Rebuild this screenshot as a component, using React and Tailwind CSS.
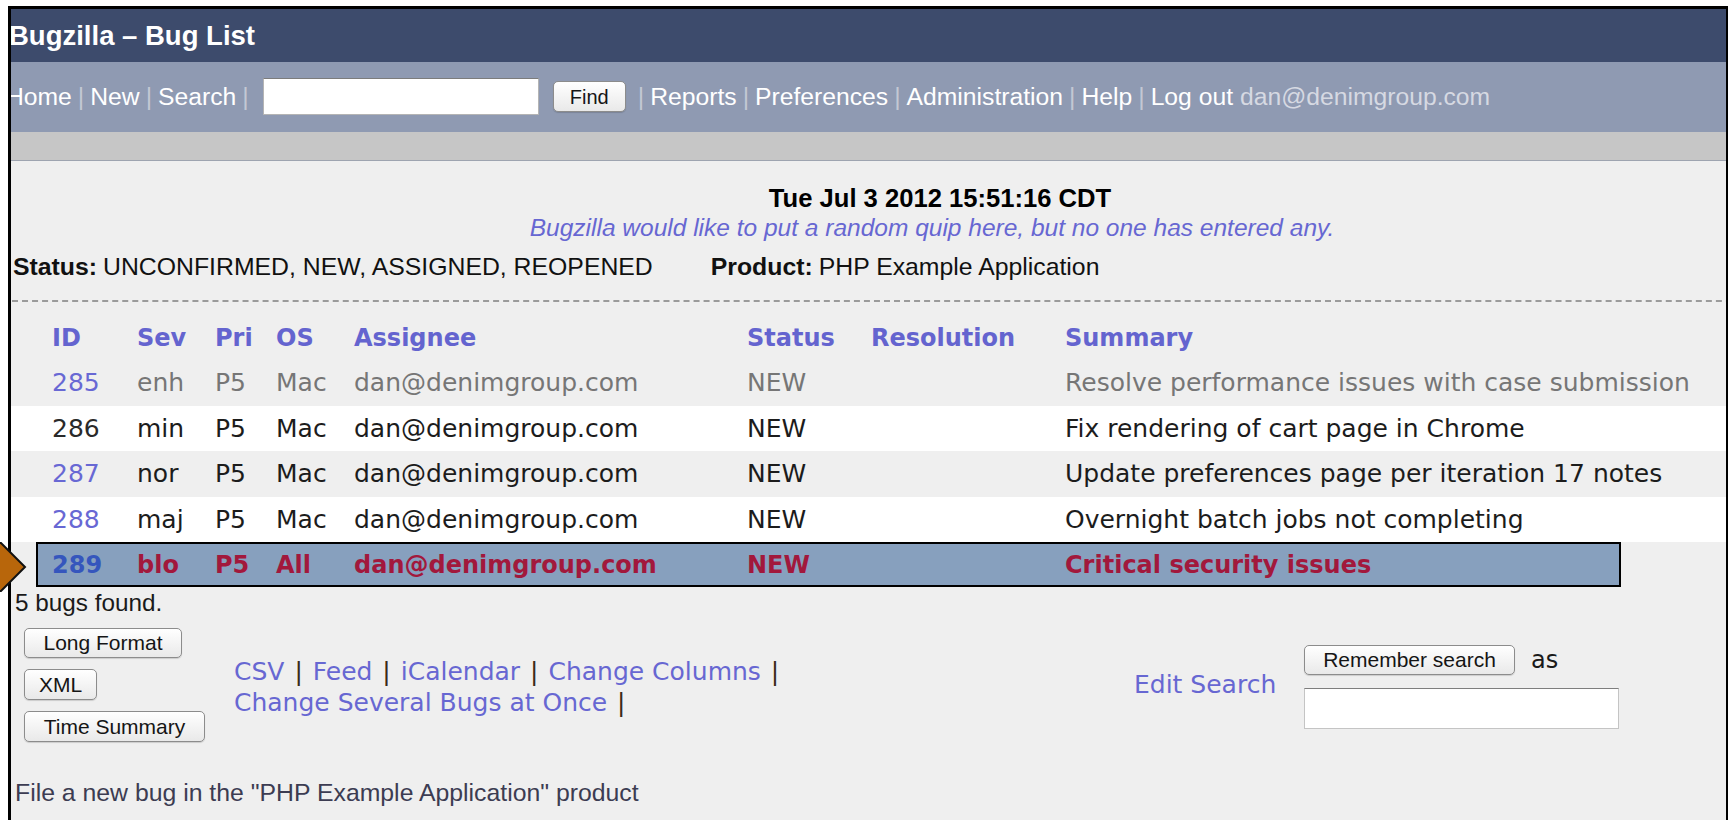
import React from 'react';

const bugs = [
  {
    id: 285, sev: 'enh', pri: 'P5', os: 'Mac', status: 'NEW',
    summary: 'Resolve performance issues with case submission',
    row: 'text-[#767676]', idCls: 'text-[#6868d4]',
  },
  {
    id: 286, sev: 'min', pri: 'P5', os: 'Mac', status: 'NEW',
    summary: 'Fix rendering of cart page in Chrome',
    row: 'bg-white text-[#1c1c1c]', idCls: 'text-[#2a2a2a]',
  },
  {
    id: 287, sev: 'nor', pri: 'P5', os: 'Mac', status: 'NEW',
    summary: 'Update preferences page per iteration 17 notes',
    row: 'text-[#1c1c1c]', idCls: 'text-[#6868d4]',
  },
  {
    id: 288, sev: 'maj', pri: 'P5', os: 'Mac', status: 'NEW',
    summary: 'Overnight batch jobs not completing',
    row: 'bg-white text-[#1c1c1c]', idCls: 'text-[#6868d4]',
  },
];

const sans = "font-['Liberation_Sans',Arial,sans-serif]";
const verdana = "font-['DejaVu_Sans',Verdana,sans-serif]";

function Sep() {
  return <span className="px-[6px] text-[#c3c8d4]">|</span>;
}

function Pipe() {
  return <span className="mx-[2px] text-[#3a2a18]">|</span>;
}

function MacButton({ children, className = '' }) {
  return (
    <button
      className={`flex items-center justify-center rounded-[5px] border border-[#8c8c8c] bg-gradient-to-b from-white to-[#e9e9e9] text-[#151515] shadow-[0_1px_1px_rgba(0,0,0,0.15)] ${className}`}
    >
      {children}
    </button>
  );
}

function Cells({ bug, idCls }) {
  return (
    <>
      <div className={`w-[85px] shrink-0 ${idCls}`}>{bug.id}</div>
      <div className="w-[78px] shrink-0">{bug.sev}</div>
      <div className="w-[61px] shrink-0">{bug.pri}</div>
      <div className="w-[78px] shrink-0">{bug.os}</div>
      <div className="w-[393px] shrink-0">dan@denimgroup.com</div>
      <div className="w-[124px] shrink-0">{bug.status}</div>
      <div className="w-[194px] shrink-0"></div>
      <div className="whitespace-nowrap">{bug.summary}</div>
    </>
  );
}

export default function App() {
  return (
    <div className="relative h-[820px] w-[1729px] overflow-hidden bg-white pl-[8px] pt-[6px]">
      <div className={`h-[814px] w-[1720px] overflow-hidden border-l-[3px] border-r-[2px] border-t-[3px] border-black bg-[#efefef] ${sans}`}>
        {/* title bar */}
        <div className="flex h-[53px] items-center bg-[#3d4b6c] text-[27.5px] font-bold text-white">
          <span className="-ml-[2px] whitespace-nowrap">Bugzilla – Bug List</span>
        </div>

        {/* links bar */}
        <div className="flex h-[70px] items-center whitespace-nowrap bg-[#8f9ab2] text-[24.7px] text-white">
          <div className="-ml-[5px] flex items-center">
            <span>Home</span><Sep /><span>New</span><Sep /><span>Search</span><Sep />
            <input className="ml-[8px] h-[37px] w-[276px] border border-[#b4b4b4] border-t-[#7c7c7c] bg-white" />
            <MacButton className={`ml-[14px] h-[31px] w-[73px] text-[20px] ${sans}`}>Find</MacButton>
            <span className="ml-[6px]"></span>
            <Sep /><span>Reports</span><Sep /><span>Preferences</span><Sep />
            <span>Administration</span><Sep /><span>Help</span><Sep />
            <span>Log out</span>
            <span className="ml-[7px] text-[#d6d9e2]">dan@denimgroup.com</span>
          </div>
        </div>
        <div className="h-[29px] border-b border-[#9ea4b0] bg-[#c6c6c6]"></div>

        {/* page heading */}
        <div className="mt-[23px] w-[1858px] text-center">
          <div className="text-[25.6px] font-bold leading-[29px] text-black">Tue Jul 3 2012 15:51:16 CDT</div>
          <div className="pr-[16px] text-[24.5px] italic leading-[29px] text-[#6767d2]">
            Bugzilla would like to put a random quip here, but no one has entered any.
          </div>
        </div>

        <div className="ml-[2px] mt-[10px] flex h-[29px] items-center whitespace-nowrap text-[24.8px] text-[#111]">
          <span className="font-bold">Status:</span>
          <span className="ml-[6px]">UNCONFIRMED, NEW, ASSIGNED, REOPENED</span>
          <span className="ml-[58px] font-bold">Product:</span>
          <span className="ml-[6px]">PHP Example Application</span>
        </div>

        <div className="ml-[1px] mt-[19px] w-[1760px] border-t-2 border-dashed border-[#9b9b9b]"></div>

        {/* bug table */}
        <div className={`mt-[13px] text-[25px] ${verdana}`}>
          <div className="flex h-[45px] items-center whitespace-nowrap pl-[41px] text-[24px] font-bold text-[#6464cf]">
            <div className="w-[85px] shrink-0">ID</div>
            <div className="w-[78px] shrink-0">Sev</div>
            <div className="w-[61px] shrink-0">Pri</div>
            <div className="w-[78px] shrink-0">OS</div>
            <div className="w-[393px] shrink-0">Assignee</div>
            <div className="w-[124px] shrink-0">Status</div>
            <div className="w-[194px] shrink-0">Resolution</div>
            <div>Summary</div>
          </div>
          {bugs.map((bug, i) => (
            <div
              key={bug.id}
              className={`flex items-center whitespace-nowrap pl-[41px] ${i % 2 === 0 ? 'h-[46px]' : 'h-[45px]'} ${bug.row}`}
            >
              <Cells bug={bug} idCls={bug.idCls} />
            </div>
          ))}
          <div className="ml-[25px] flex h-[45px] w-[1585px] items-center whitespace-nowrap border-2 border-black bg-[#87a0be] pl-[14px] text-[24px] font-bold text-[#a2183c]">
            <Cells
              bug={{ id: 289, sev: 'blo', pri: 'P5', os: 'All', status: 'NEW', summary: 'Critical security issues' }}
              idCls="text-[#3556bd]"
            />
          </div>
        </div>

        <div className="ml-[4px] mt-[1px] text-[24.3px] leading-[29px] text-[#1a1a1a]">5 bugs found.</div>

        {/* list actions */}
        <div className="mt-[11px] flex items-center whitespace-nowrap">
          <div className="flex w-[223px] shrink-0 flex-col gap-[11px] pl-[13px] text-[21px]">
            <MacButton className="h-[30px] w-[158px]">Long Format</MacButton>
            <MacButton className="h-[31px] w-[73px]">XML</MacButton>
            <MacButton className="h-[31px] w-[181px]">Time Summary</MacButton>
          </div>
          <div className={`w-[900px] shrink-0 pt-[4px] text-[25px] leading-[31px] text-[#6767d2] ${verdana}`}>
            <div>
              CSV <Pipe /> Feed <Pipe /> iCalendar <Pipe /> Change Columns <Pipe />
            </div>
            <div>
              Change Several Bugs at Once <Pipe />
            </div>
          </div>
          <div className={`w-[170px] shrink-0 text-[25px] text-[#6767d2] ${verdana}`}>Edit Search</div>
          <div className="flex flex-col gap-[10px]">
            <div className="flex items-center">
              <MacButton className="h-[30px] w-[211px] text-[21px]">Remember search</MacButton>
              <span className={`ml-[16px] text-[24px] text-[#1a1a1a] ${verdana}`}>as</span>
            </div>
            <input className="h-[41px] w-[315px] border border-[#c4c4c4] border-t-[#7e7e7e] bg-white" />
          </div>
        </div>

        <div className="ml-[4px] mt-[38px] text-[24.8px] leading-[25px] text-[#3c3c52]">
          File a new bug in the "PHP Example Application" product
        </div>
      </div>

      {/* pointer arrow at the selected row */}
      <svg className="absolute left-0 top-[542px]" width="28" height="50" viewBox="0 0 28 50">
        <polygon points="-4,1 1,1 25,25 1,49 -4,49" fill="#b8660b" stroke="#111" strokeWidth="2" />
      </svg>
    </div>
  );
}
